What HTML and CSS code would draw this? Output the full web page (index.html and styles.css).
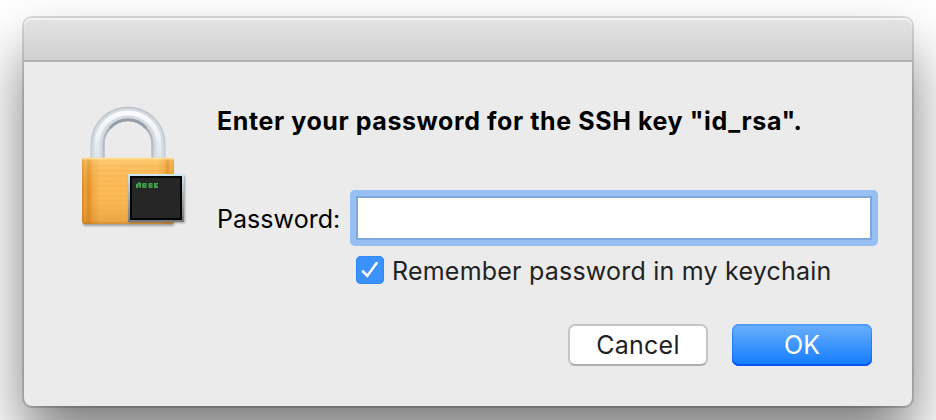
FILE: index.html
```html
<!DOCTYPE html>
<html lang="en">
<head>
<meta charset="utf-8">
<title>SSH key password</title>
<link rel="stylesheet" href="styles.css">
</head>
<body>
<main class="dialog">
  <header class="titlebar"></header>
  <form class="content">
    <svg class="lock" viewBox="76 100 116 132" aria-hidden="true">
      <defs>
        <linearGradient id="brass" x1="0" x2="1">
          <stop offset="0" stop-color="#cf8122"/><stop offset=".03" stop-color="#eda33b"/><stop offset=".07" stop-color="#d98a25"/><stop offset=".12" stop-color="#f2aa43"/><stop offset=".2" stop-color="#fbbb58"/><stop offset=".82" stop-color="#fbb955"/><stop offset=".9" stop-color="#eca33a"/><stop offset=".93" stop-color="#d98518"/><stop offset=".97" stop-color="#f2a53a"/><stop offset="1" stop-color="#db8927"/>
        </linearGradient>
        <linearGradient id="shade" x1="0" x2="0" y1="0" y2="1">
          <stop offset="0" stop-color="#ffe09a" stop-opacity=".4"/><stop offset=".5" stop-color="#ffb040" stop-opacity="0"/><stop offset="1" stop-color="#c87a20" stop-opacity=".4"/>
        </linearGradient>
        <linearGradient id="frame" x1="0" x2="0" y1="0" y2="1">
          <stop offset="0" stop-color="#d0e8f0"/><stop offset=".5" stop-color="#a2acb2"/><stop offset="1" stop-color="#74777b"/>
        </linearGradient>
        <linearGradient id="arch" gradientUnits="userSpaceOnUse" x1="0" x2="0" y1="118" y2="159">
          <stop offset="0" stop-color="#8f98a2"/><stop offset=".5" stop-color="#b3bac4"/><stop offset="1" stop-color="#bbc2cc"/>
        </linearGradient>
        <linearGradient id="shine" gradientUnits="userSpaceOnUse" x1="0" x2="0" y1="107" y2="159">
          <stop offset="0" stop-color="#fbfcff"/><stop offset=".5" stop-color="#f0f3f8"/><stop offset="1" stop-color="#dce1e8"/>
        </linearGradient>
        <filter id="soft" x="-20%" y="-20%" width="140%" height="140%"><feGaussianBlur stdDeviation="1.2"/></filter>
        <filter id="smooth" x="-10%" y="-20%" width="120%" height="140%"><feGaussianBlur stdDeviation=".7"/></filter>
      </defs>
      <g fill="none">
        <path d="M97.500 159V144.500a30.500 30.500 0 0 1 61 0V159" transform="translate(0 -.5)" stroke="#c0c6ce" stroke-width="14"/>
        <path d="M97.500 159V144.500a30.500 30.500 0 0 1 61 0V159" stroke="#d6dbe2" stroke-width="11.500"/>
        <path d="M103.500 159V144.500a24.500 24.500 0 0 1 49 0V159" stroke="url(#arch)" stroke-width="2.200" filter="url(#smooth)"/>
        <path d="M110 128a24 24 0 0 1 36 0" stroke="#959fa9" stroke-width="3" filter="url(#smooth)"/>
        <path d="M97 159V144a31 31 0 0 1 62 0V159" stroke="url(#shine)" stroke-width="5" filter="url(#smooth)"/>
      </g>
      <rect x="83" y="218" width="91" height="8" rx="2" fill="#777" opacity=".65" filter="url(#soft)"/>
      <path d="M82 158h92v63q0 3-3 3H85q-3 0-3-3z" fill="url(#brass)"/>
      <path d="M82 158h92v63q0 3-3 3H85q-3 0-3-3z" fill="url(#shade)"/>
      <path d="M82 157.500h92v2H82z" fill="#fee3a0" opacity=".8"/>
      <path d="M88 166h80M88 171h80M88 176h80M88 181h80M88 186h80M88 191h80M88 196h80M88 201h80M88 206h80M88 211h80" stroke="#e99d35" opacity=".3"/>
      <path d="M83 223h90" stroke="#b8771e" opacity=".65"/>
      <rect x="129" y="176" width="56" height="47" fill="#555" opacity=".5" filter="url(#soft)"/>
      <rect x="128" y="174" width="56" height="48" fill="url(#frame)"/>
      <rect x="130" y="176" width="52" height="44" fill="#050505"/>
      <rect x="132" y="178" width="48" height="40" fill="#262626"/>
      <path d="M136 184h1.500v-1.500H141V188h-1.500v-1.500H138V188h-2zM142.500 183h4v5h-4v-2h-.5v-1.500h.5zM148.500 183h4v5h-4zM154 183h4v1.500h-1.500V186h1.500v2h-4z" fill="#3ca54a"/>
      <path d="M138 185h1.500M144 184.500h1.500M144 186.500h1.500M150 184.500h1.500M150 186.500h1.500" stroke="#286c30"/>
    </svg>
    <div class="fields">
      <h1 class="message">Enter your password for the SSH key "id_rsa".</h1>
      <div class="row">
        <label class="label" for="password">Password:</label>
        <span class="focus-ring"><input class="password" id="password" type="password"></span>
      </div>
      <label class="remember">
        <span class="check"><svg viewBox="0 0 28 28"><path d="M7 16.200l4.300 4.500L20.700 7.500" transform="translate(0 1)" fill="none" stroke="#1970dc" stroke-width="2" opacity=".5"/><path d="M7 15.500l4.300 4.500L20.700 7" fill="none" stroke="#fff" stroke-width="2.600" stroke-linecap="round"/></svg></span>
        <span class="remember-text">Remember password in my keychain</span>
      </label>
      <div class="actions">
        <button class="button cancel" type="button">Cancel</button>
        <button class="button ok" type="button">OK</button>
      </div>
    </div>
  </form>
</main>
</body>
</html>
```
FILE: styles.css
```css
* { box-sizing: border-box; }
html { background: #fff; }
body {
  margin: 0;
  height: 420px;
  padding: 18px 24px 14px;
  overflow: hidden;
  font: 25px/32px Inter, "Liberation Sans", sans-serif;
  color: #000;
}
.dialog {
  height: 388px;
  border-radius: 8px;
  background: #ebebeb;
  box-shadow: 0 0 0 2px rgba(0, 0, 0, .13), 0 1px 3px rgba(0, 0, 0, .1), 0 34px 60px rgba(0, 0, 0, .52);
}
.titlebar {
  height: 44px;
  border-radius: 8px 8px 0 0;
  border-bottom: 2px solid #b1b1b1;
  background: linear-gradient(#e4e4e4, #d0d0d0);
  box-shadow: inset 0 2px #f3f3f3;
}
.content { display: flex; padding: 38px 40px 0 52px; }
.lock { flex: none; width: 116px; height: 132px; }
.fields { flex: 1; padding-left: 25px; }
.message {
  margin: 5px 0 0;
  font-size: 25px;
  font-weight: 700;
  line-height: 32px;
  white-space: nowrap;
  letter-spacing: .59px;
}
.row { display: flex; align-items: center; margin-top: 59px; height: 44px; }
.label { width: 133px; padding-top: 2px; letter-spacing: .05px; white-space: nowrap; }
.focus-ring {
  flex: 1;
  min-width: 0;
  margin: -6px -6px -6px 0;
  padding: 6px;
  border-radius: 5px;
  background: #96c0f4;
}
.password {
  display: block;
  width: 100%;
  height: 44px;
  padding: 0 6px;
  border: 2px solid #7da7de;
  border-radius: 0;
  outline: none;
  background: #fff;
}
.remember {
  display: flex;
  align-items: center;
  gap: 8px;
  height: 28px;
  margin: 16px 0 0 139px;
  color: #222;
}
.remember-text { padding-top: 2px; white-space: nowrap; letter-spacing: .22px; }
.check {
  flex: none;
  width: 28px;
  height: 28px;
  border-radius: 5px;
  background: #3c92fd;
  box-shadow: inset 0 0 0 1px #3188f7;
}
.check svg { display: block; width: 28px; height: 28px; }
.actions { display: flex; justify-content: flex-end; gap: 24px; margin-top: 40px; }
.button {
  width: 140px;
  height: 42px;
  padding: 0;
  border: 0;
  border-radius: 7px;
  font: inherit;
  line-height: 42px;
}
.cancel {
  border: 2px solid #c5c5c5;
  border-bottom-color: #adadad;
  background: #fff;
  color: #222;
  line-height: 38px;
  letter-spacing: .25px;
}
.ok {
  background: linear-gradient(#6bb0fb, #127bff);
  box-shadow: inset 0 2px #519cf7, inset 0 -2px #0753ff, inset 1px 0 rgba(0, 90, 255, .45), inset -1px 0 rgba(0, 90, 255, .45);
  color: #fff;
}
```
